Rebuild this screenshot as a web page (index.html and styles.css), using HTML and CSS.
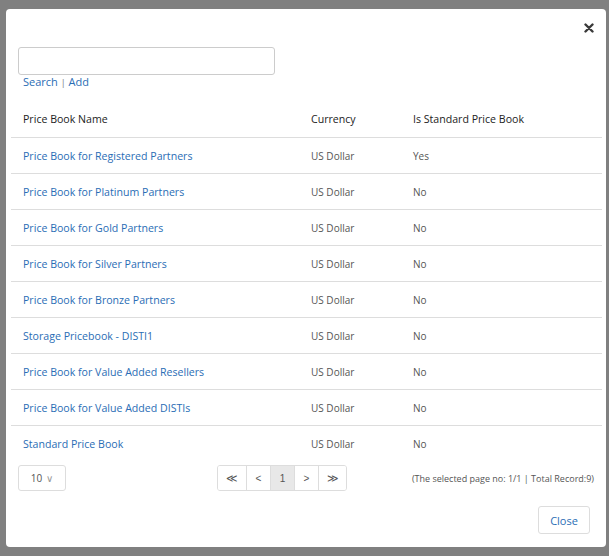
FILE: index.html
```html
<!doctype html>
<html lang="en">
<head>
<meta charset="utf-8">
<title>Price Books</title>
<link rel="stylesheet" href="styles.css">
</head>
<body>

	<div class="backdrop">

		<div class="modal">

			<div class="modalHeader">
				<button class="btnX" title="close">
					<svg width="10" height="10" viewBox="0 0 10 10"><path d="M1.5 1.5 L8.5 8.5 M8.5 1.5 L1.5 8.5" stroke="#3a3a3a" stroke-width="2.4" stroke-linecap="round"/></svg>
				</button>
			</div>

			<div class="searchBox">
				<input type="text" class="inpSearch">
				<div class="searchLinks"><a href="#">Search</a> <span class="sep">|</span> <a href="#">Add</a></div>
			</div>

			<table class="grid">
				<thead>
					<tr><th class="colName">Price Book Name</th><th class="colCur">Currency</th><th>Is Standard Price Book</th></tr>
				</thead>
				<tbody id="tbody"></tbody>
			</table>

			<div class="pagerRow">
				<div class="pageSize">10 <span class="chev">&#8744;</span></div>
				<div class="pager">
					<button class="wide">&#8810;</button><button>&lt;</button><button class="active">1</button><button>&gt;</button><button class="wide">&#8811;</button>
				</div>
				<div class="pageInfo">(The selected page no: 1/1 | Total Record:9)</div>
			</div>

			<div class="modalFooter">
				<button class="btnClose">Close</button>
			</div>

		</div>

	</div>

<script>

	const books = [
		[ 'Price Book for Registered Partners', 'Yes' ],
		[ 'Price Book for Platinum Partners', 'No' ],
		[ 'Price Book for Gold Partners', 'No' ],
		[ 'Price Book for Silver Partners', 'No' ],
		[ 'Price Book for Bronze Partners', 'No' ],
		[ 'Storage Pricebook - DISTI1', 'No' ],
		[ 'Price Book for Value Added Resellers', 'No' ],
		[ 'Price Book for Value Added DISTIs', 'No' ],
		[ 'Standard Price Book', 'No' ]
	];

	tbody.innerHTML = books.map( b =>
		`<tr><td><a href="#">${ b[ 0 ] }</a></td><td>US Dollar</td><td>${ b[ 1 ] }</td></tr>`
	).join( '' );

</script>
</body>
</html>
```

FILE: styles.css
```css
body { margin: 0; background: #808080; font-family: "Open Sans", sans-serif; }
a { color: #2a6db5; text-decoration: none; }

.backdrop { height: 556px; padding: 9px 3px 0 6px; box-sizing: border-box; }

.modal { background: #fff; border-radius: 4px; width: 600px; height: 538px; box-sizing: border-box; padding: 0 4px 0 5px; display: flex; flex-direction: column; }

.modalHeader { display: flex; justify-content: flex-end; height: 38px; }
.btnX { background: none; border: none; padding: 14px 8px 0 0; cursor: pointer; line-height: 0; height: 24px; }

.searchBox { padding: 0 0 0 7px; }
.inpSearch { width: 257px; height: 28px; box-sizing: border-box; border: 1px solid #ccc; border-radius: 3px; display: block; }
.searchLinks { font-size: 11px; padding: 0 0 0 5px; line-height: 14px; }
.sep { color: #777; font-size: 9px; }

.grid { border-collapse: collapse; width: 591px; margin-top: 11px; }
.grid th { text-align: left; font-weight: normal; font-size: 10.6px; color: #222; height: 36px; padding: 0 12px; border-bottom: 1px solid #ddd; }
.grid td { font-size: 10px; color: #555; height: 35px; padding: 0 12px; border-bottom: 1px solid #ddd; }
.grid td:first-child { font-size: 10.6px; }
.grid tr:last-child td { border-bottom: none; }
.colName { width: 264px; }
.colCur { width: 78px; }

.pagerRow { display: flex; align-items: center; padding: 4px 0 0 7px; height: 26px; }
.pageSize { width: 48px; height: 26px; box-sizing: border-box; border: 1px solid #ddd; border-radius: 3px; font-size: 10px; color: #555; display: flex; align-items: center; justify-content: center; gap: 4px; }
.chev { color: #999; font-size: 10px; }
.pager { display: flex; margin-left: 151px; border: 1px solid #ddd; border-radius: 3px; overflow: hidden; }
.pager button { background: #fff; border: none; border-left: 1px solid #ddd; height: 24px; width: 24px; padding: 0; font-size: 10px; color: #555; cursor: pointer; }
.pager .wide { width: 28px; font-size: 11px; }
.pager button:first-child { border-left: none; }
.pager .active { background: #e8e8e8; }
.pageInfo { margin-left: auto; padding-right: 8px; font-size: 9px; color: #555; }

.modalFooter { display: flex; justify-content: flex-end; padding: 15px 12px 0 0; }
.btnClose { background: #fff; border: 1px solid #ddd; border-radius: 3px; height: 28px; width: 52px; font-family: inherit; font-size: 11px; color: #2a6db5; cursor: pointer; }
```
